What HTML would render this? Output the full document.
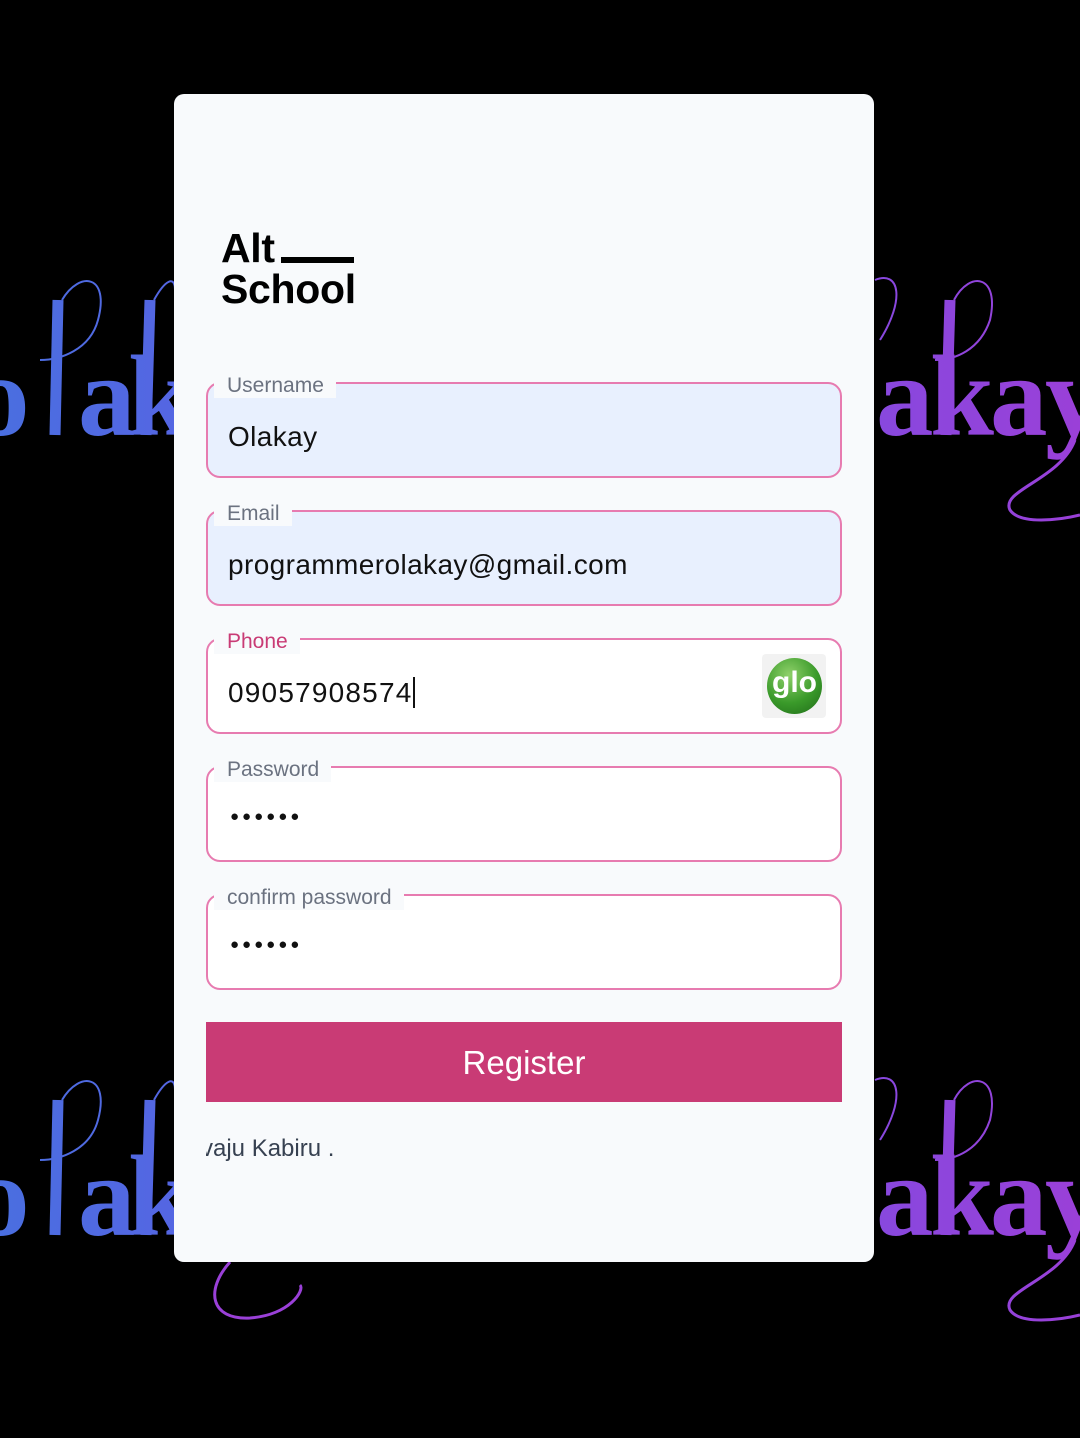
<!DOCTYPE html>
<html><head><meta charset="utf-8"><style>
*{box-sizing:border-box;margin:0;padding:0}
body{width:1080px;height:1438px;background:#000;position:relative;overflow:hidden;font-family:"Liberation Sans",sans-serif}
svg.bg{position:absolute;left:0;top:0}
.card{position:absolute;left:174px;top:94px;width:700px;height:1168px;background:#f8fafc;border-radius:10px}
.logo{position:absolute;left:47px;top:134px;font-weight:bold;font-size:41px;line-height:41px;color:#000;letter-spacing:-0.3px}
.logo .bar{position:absolute;left:60px;top:29px;width:73px;height:6px;background:#000}
.f{position:absolute;left:32px;width:636px;height:96px;border:2px solid #e77bb0;border-radius:14px;background:#fff}
.f.fill{background:#e8f0fe}
.f label{position:absolute;left:6px;top:-10px;background:#f8fafc;padding:0 12px 0 13px;font-size:21px;color:#6b7280;line-height:24px}
.f .v{position:absolute;left:20px;top:37px;font-size:28px;color:#111;letter-spacing:0.4px}
.f .dots{position:absolute;left:22px;top:40px;font-size:15px;letter-spacing:3px;color:#111}
.btn{position:absolute;left:32px;top:928px;width:636px;height:80px;background:#c93b75;color:#fff;font-size:33px;text-align:center;line-height:82px}
.foot{position:absolute;left:32px;top:1041px;width:300px;overflow:hidden;font-size:24px;color:#374151;white-space:nowrap}
.glo{position:absolute;right:14px;top:14px;width:64px;height:64px;background:#f2f2f2;border-radius:4px}
.glo div{position:absolute;left:5px;top:4px;width:55px;height:56px;border-radius:50%;background:radial-gradient(circle at 40% 30%,#8fd16a,#3a9a2a 55%,#1f6a18);color:#fff;font-size:30px;text-align:center;line-height:50px;font-weight:bold}
</style></head><body>
<svg class="bg" width="1080" height="1438">
<defs><linearGradient id="g" x1="0" x2="1080" gradientUnits="userSpaceOnUse"><stop offset="0" stop-color="#4a6ee0"/><stop offset="0.5" stop-color="#6a55e8"/><stop offset="1" stop-color="#9a40d8"/></linearGradient>
<g id="t">
<g font-family="Liberation Serif" font-weight="bold" font-size="115" fill="url(#g)">
<text x="-28" y="435">o</text><text x="78" y="435">a</text><text x="128" y="435">k</text>
<text x="876" y="435">a</text><text x="930" y="435">k</text><text x="990" y="435">a</text><text x="1045" y="435">y</text>
</g>
<g fill="none" stroke="url(#g)">
<path d="M58 300 L55 435" stroke-width="11"/><path d="M150 300 L146 435" stroke-width="11"/>
<path d="M62 300 C80 270 110 275 98 320 C90 350 60 360 40 360" stroke-width="2"/>
<path d="M154 300 C165 280 175 275 175 290" stroke-width="2"/>
<path d="M950 300 L946 435" stroke-width="11"/>
<path d="M954 300 C970 270 1000 275 990 320 C980 350 955 360 935 360" stroke-width="2"/>
<path d="M875 280 C900 270 905 300 880 340" stroke-width="2"/>
<path d="M1075 440 C1060 480 1000 490 1010 510 C1020 525 1060 520 1080 515" stroke-width="3"/>
</g>
</g></defs>
<use href="#t"/><use href="#t" y="800"/>
<path d="M230 1262 C205 1290 210 1320 250 1318 C290 1315 305 1290 300 1285" fill="none" stroke="#9a40d8" stroke-width="3"/>
</svg>
<div class="card">
<div class="logo">Alt<div class="bar"></div><br>School</div>
<div class="f fill" style="top:288px"><label>Username</label><div class="v">Olakay</div></div>
<div class="f fill" style="top:416px"><label>Email</label><div class="v">programmerolakay@gmail.com</div></div>
<div class="f" style="top:544px"><label style="color:#c93b75">Phone</label><div class="v" style="letter-spacing:1.2px">09057908574<span style="border-left:2px solid #111;margin-left:0"></span></div><div class="glo"><div>glo</div></div></div>
<div class="f" style="top:672px"><label>Password</label><div class="dots">●●●●●●</div></div>
<div class="f" style="top:800px"><label>confirm password</label><div class="dots">●●●●●●</div></div>
<div class="btn">Register</div>
<div class="foot"><span style="margin-left:-5px">vaju Kabiru .</span></div>
</div>
</body></html>
